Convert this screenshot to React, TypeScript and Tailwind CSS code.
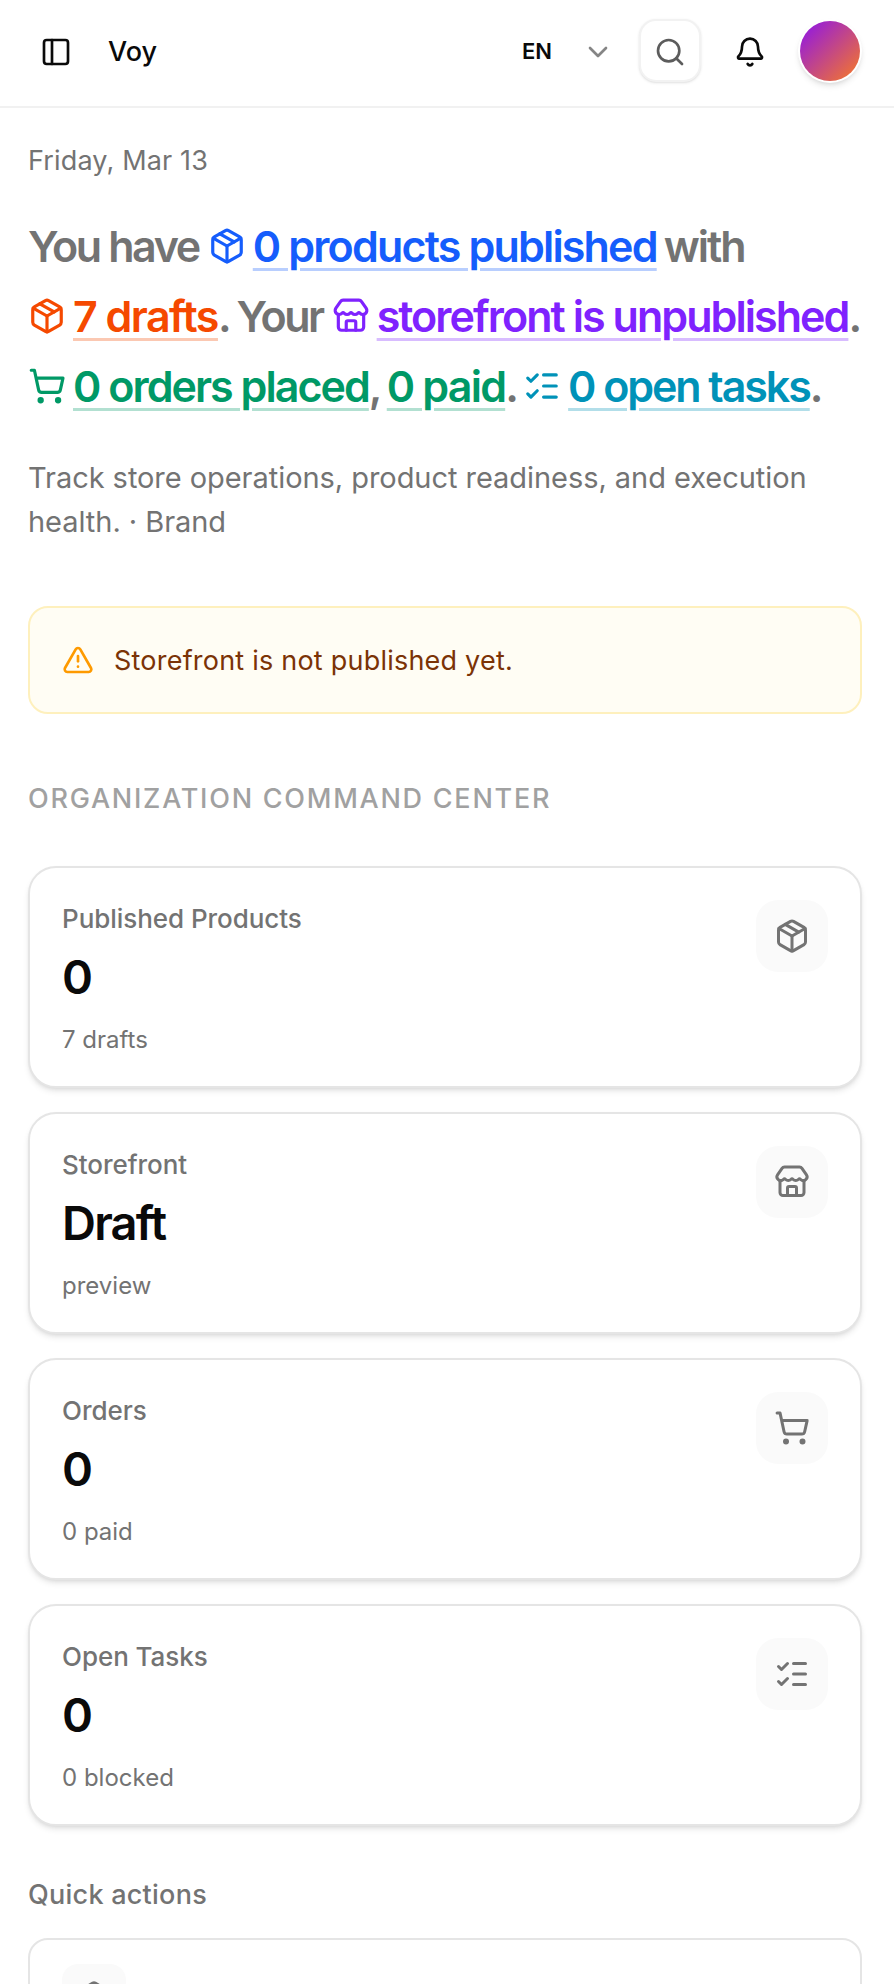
import React from 'react';
import {
    Bell,
    ChevronDown,
    ListChecks,
    Package,
    PanelLeft,
    Search,
    ShoppingCart,
    Store,
    TriangleAlert,
} from 'lucide-react';

const stats = [
    { label: 'Published Products', value: '0', hint: '7 drafts', icon: Package },
    { label: 'Storefront', value: 'Draft', hint: 'preview', icon: Store },
    { label: 'Orders', value: '0', hint: '0 paid', icon: ShoppingCart },
    { label: 'Open Tasks', value: '0', hint: '0 blocked', icon: ListChecks },
];

const linkBase = 'underline decoration-[3px] underline-offset-[6px]';
const iconBase = 'mr-[7px] h-[38px] w-[38px] shrink-0';

function Header() {
    return (
        <header className="flex h-[108px] items-center justify-between border-b-2 border-[#f1f1f1] pl-10 pr-8 pb-0.5">
            <div className="flex items-center">
                <PanelLeft className="h-8 w-8" />
                <span className="ml-9 text-[27px] font-medium leading-8">Voy</span>
            </div>
            <div className="flex items-center">
                <span className="mb-0.5 text-[22px] font-semibold">EN</span>
                <ChevronDown className="ml-[30px] h-8 w-8 text-[#858585]" />
                <button className="mb-[3px] ml-[25px] flex h-[63px] w-[62px] items-center justify-center rounded-[17px] border-2 border-[#f2f2f2] bg-white pt-[3px] shadow-sm">
                    <Search className="h-8 w-8 text-[#5c5c5c]" />
                </button>
                <Bell className="ml-[33px] h-8 w-8" />
                <div className="mb-0.5 ml-8 h-16 w-16 rounded-full bg-white p-0.5 shadow-md">
                    <div className="h-full w-full rounded-full bg-linear-to-br/srgb from-[#8b12ee] to-[#f97b22]" />
                </div>
            </div>
        </header>
    );
}

function Summary() {
    return (
        <h1 className="mt-[30px] text-[43px] font-semibold leading-[70px] tracking-[-1.8px] whitespace-nowrap text-[#737373]">
            <div className="flex items-center">
                <span className="mr-[9px] tracking-[-2.4px]">You have</span>
                <Package className={`${iconBase} text-[#155dfc]`} />
                <span className={`${linkBase} tracking-[-1.83px] text-[#155dfc] decoration-[#155dfc]/30`}>0 products published</span>
                <span className="ml-[7px] tracking-[-2px]">with</span>
            </div>
            <div className="flex items-center">
                <Package className={`${iconBase} text-[#f54900]`} />
                <span className={`${linkBase} tracking-[-1.55px] text-[#f54900] decoration-[#f54900]/30`}>7 drafts</span>
                <span className="mr-[9px] tracking-[-2.5px]">. Your</span>
                <Store className={`${iconBase} text-[#7f22fe]`} />
                <span className={`${linkBase} tracking-[-1.95px] text-[#7f22fe] decoration-[#7f22fe]/30`}>storefront is unpublished</span>
                <span>.</span>
            </div>
            <div className="flex items-center">
                <ShoppingCart className={`${iconBase} text-[#009966]`} />
                <span className={`${linkBase} tracking-[-1.97px] text-[#009966] decoration-[#009966]/30`}>0 orders placed</span>
                <span className="mr-[6px]">,</span>
                <span className={`${linkBase} tracking-[-1.8px] text-[#009966] decoration-[#009966]/30`}>0 paid</span>
                <span className="mr-[6px]">.</span>
                <ListChecks className={`${iconBase} text-[#0092b8]`} />
                <span className={`${linkBase} tracking-[-2.08px] text-[#0092b8] decoration-[#0092b8]/30`}>0 open tasks</span>
                <span>.</span>
            </div>
        </h1>
    );
}

export default function App() {
    return (
        <div className="h-[1984px] overflow-hidden bg-white font-['Inter',sans-serif] text-[#0a0a0a] antialiased">
            <Header />

            <main className="pl-7 pr-8 pt-[33px]">
                <p className="text-[27px] leading-10 tracking-[0.15px] text-[#737373]">Friday, Mar 13</p>

                <Summary />

                <p className="mt-[35px] text-[29px] leading-[44px] tracking-[-0.05px] text-[#737373]">
                    Track store operations, product readiness, and execution
                    <br />
                    health. · Brand
                </p>

                {/* Publish warning */}
                <div className="mt-[62px] flex h-[108px] items-center rounded-[20px] border-2 border-[#fef0bd] bg-[#fffdf4] px-8">
                    <TriangleAlert className="h-8 w-8 text-[#fe9a00]" />
                    <span className="ml-5 mt-0.5 text-[27px] tracking-[0.22px] text-[#7b3306]">Storefront is not published yet.</span>
                </div>

                <h2 className="mt-[65px] text-[27px] font-medium uppercase leading-10 tracking-[1.75px] text-[#a1a1a1]">
                    Organization command center
                </h2>

                <div className="mt-[47px] grid gap-6">
                    {stats.map((stat) => (
                        <div
                            key={stat.label}
                            className="flex h-[222px] items-start justify-between rounded-[28px] border-2 border-[#e5e5e5] bg-white p-8 shadow-md"
                        >
                            <div>
                                <p className="-mt-px text-[26px] font-medium leading-10 tracking-[-0.05px] text-[#737373]">{stat.label}</p>
                                <p className="mt-1.5 text-[47px] font-semibold leading-[64px] tracking-[-1.8px]">{stat.value}</p>
                                <p className="mt-[15px] text-[24px] leading-8 text-[#737373]">{stat.hint}</p>
                            </div>
                            <div className="flex h-18 w-18 items-center justify-center rounded-[22px] bg-[#fafafa]">
                                <stat.icon className="h-9 w-9 text-[#737373]" />
                            </div>
                        </div>
                    ))}
                </div>

                <h2 className="mt-[49px] text-[27px] font-medium leading-10 tracking-[0.25px] text-[#737373]">Quick actions</h2>

                <div className="mt-[23px] h-[114px] rounded-[20px] border-2 border-[#e5e5e5] px-8 py-6">
                    <div className="flex h-16 w-16 items-center justify-center rounded-[16px] bg-[#fafafa]">
                        <Package className="h-8 w-8 text-[#737373]" />
                    </div>
                </div>
            </main>
        </div>
    );
}
